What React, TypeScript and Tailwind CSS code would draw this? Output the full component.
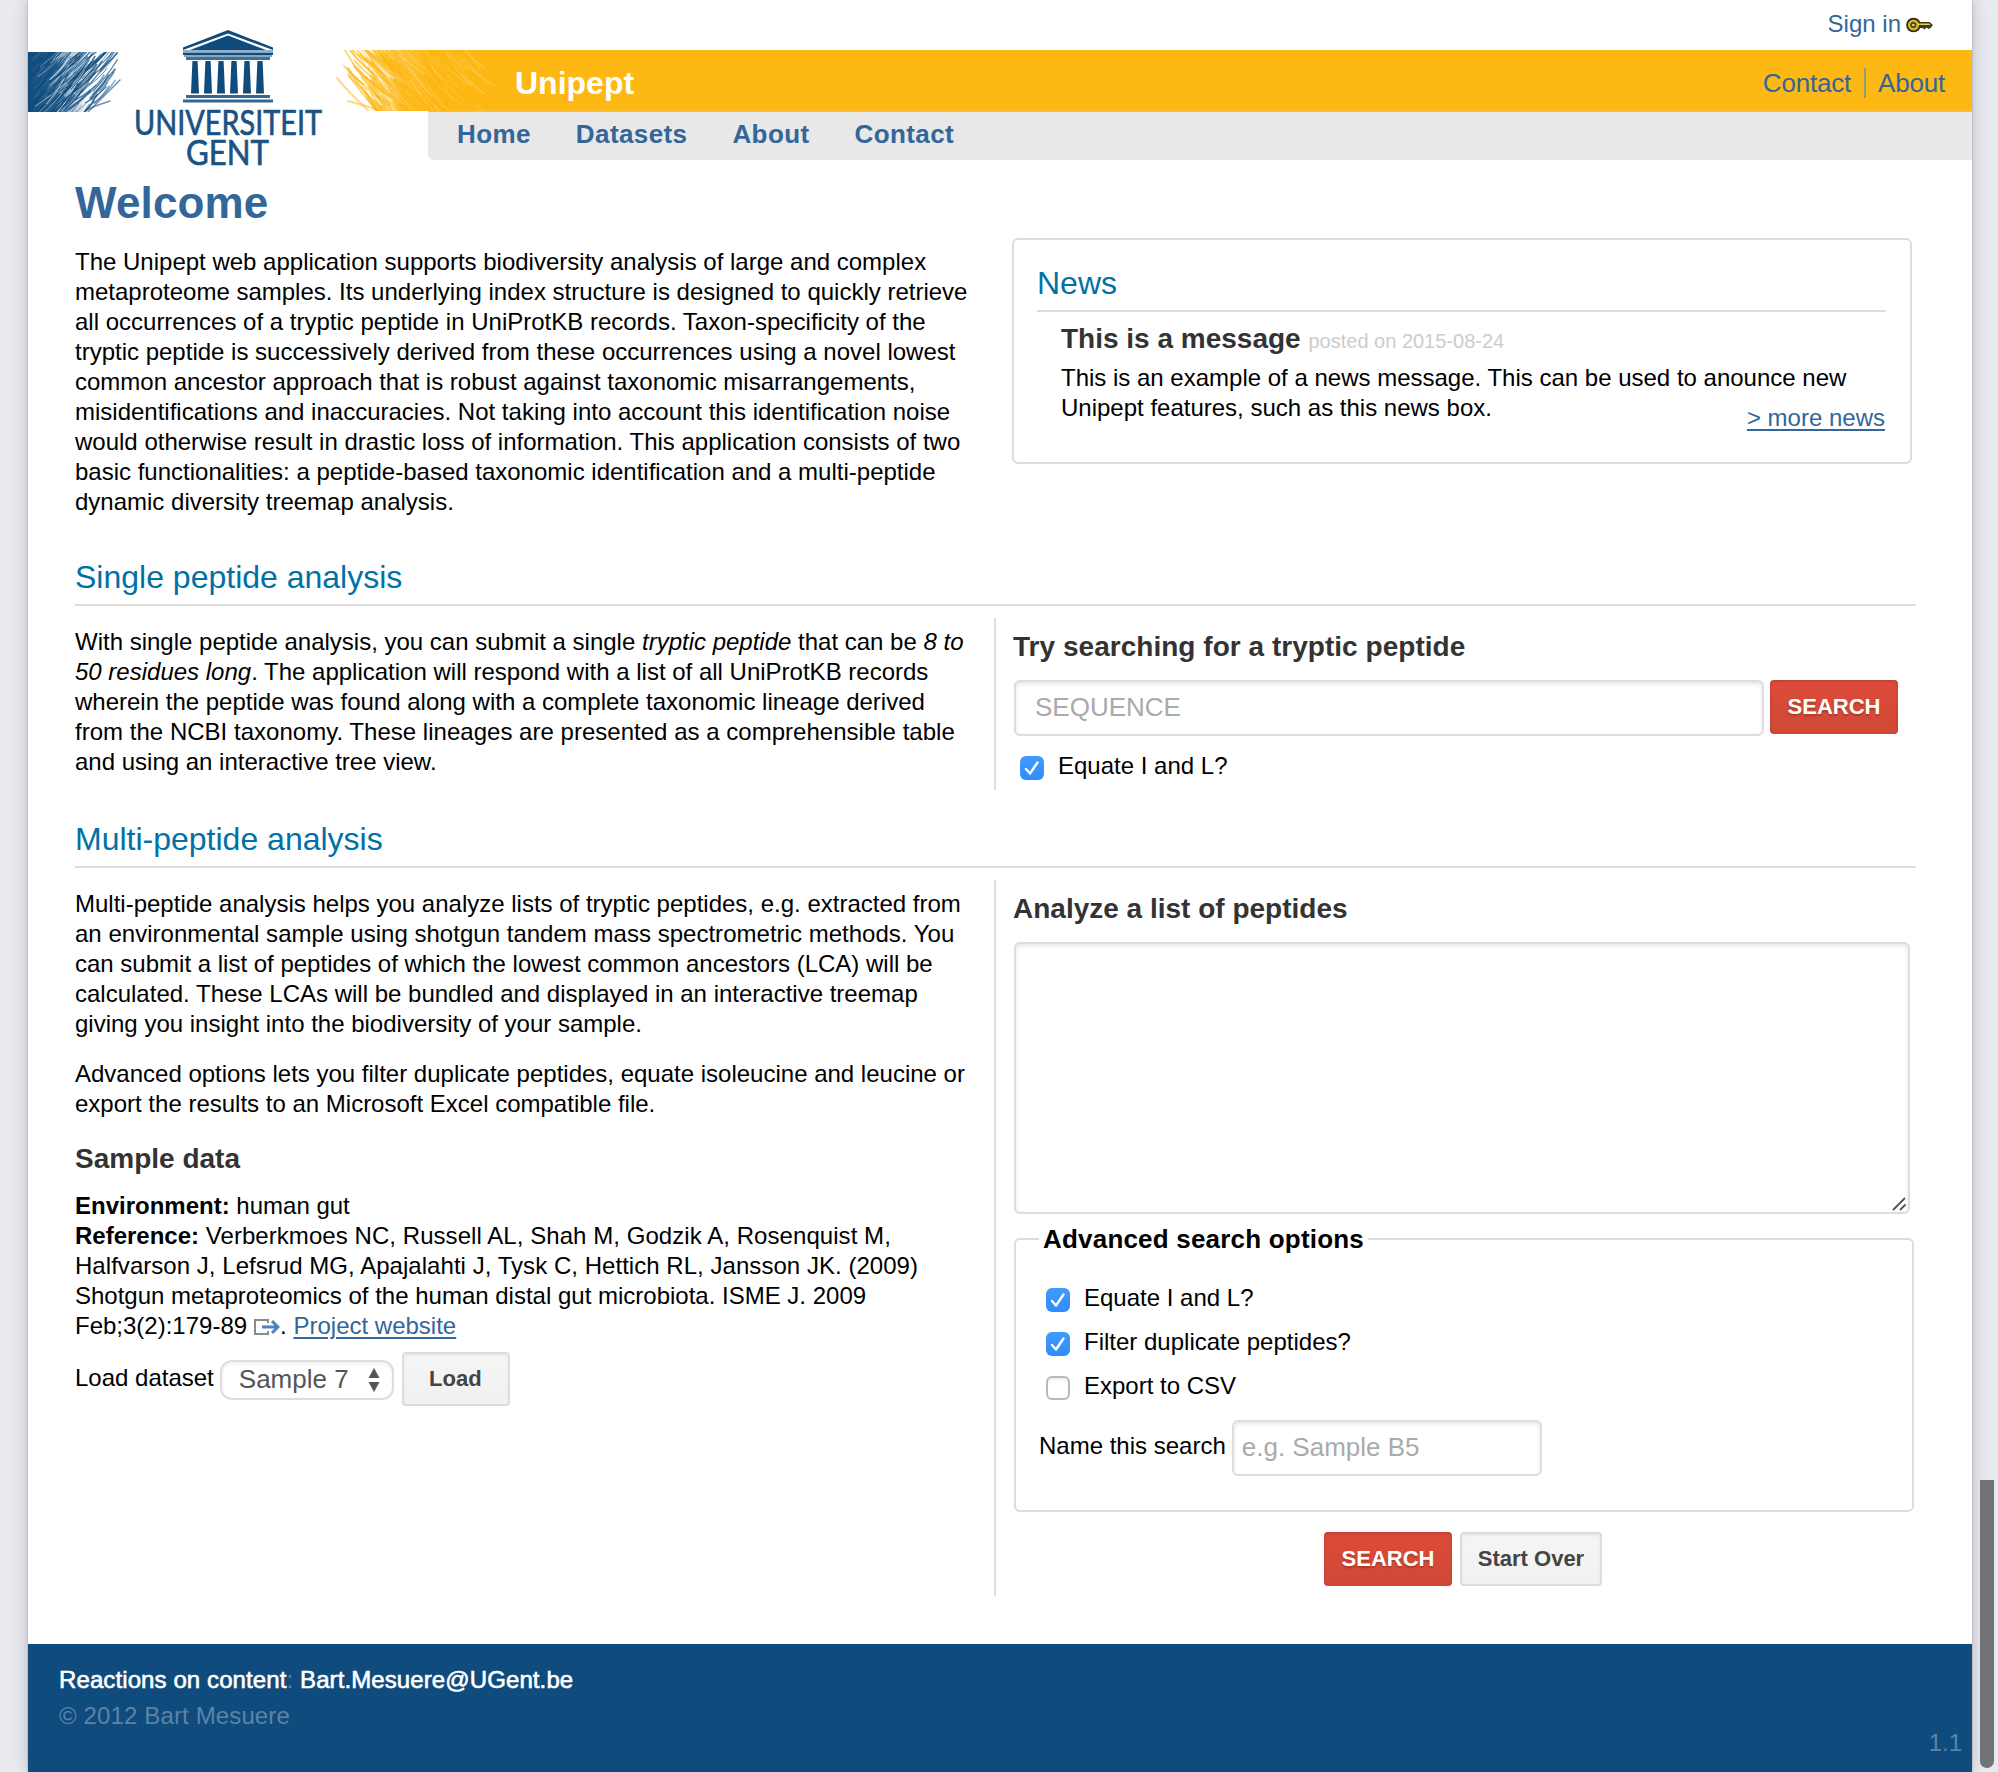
import React from "react";

type Stroke = { d: string; w: number; o: number };

function makeRandom(seed: number) {
  let s = seed;
  return () => {
    s = (s * 1664525 + 1013904223) % 4294967296;
    return s / 4294967296;
  };
}

// Crayon-like hatching that thins out from `near` to `far`; dir = 1 leans "/" and dir = -1 leans "\".
function hatch(seed: number, count: number, near: number, far: number, dir: number, power: number): Stroke[] {
  const rnd = makeRandom(seed);
  const out: Stroke[] = [];
  for (let i = 0; i < count; i++) {
    const t = Math.pow(rnd(), power);
    const y = 34 + rnd() * 74;
    const x = near + (far - near) * t - dir * Math.max(0, y - 78) * 0.8 * t;
    const len = 22 + rnd() * 20;
    const a = ((36 + rnd() * 20) * Math.PI) / 180;
    const x2 = x - dir * Math.cos(a) * len;
    const y2 = y + Math.sin(a) * len;
    const mx = (x + x2) / 2 + dir * 1.5;
    const my = (y + y2) / 2 + 1.5;
    out.push({
      d: `M${x.toFixed(1)} ${y.toFixed(1)}Q${mx.toFixed(1)} ${my.toFixed(1)} ${x2.toFixed(1)} ${y2.toFixed(1)}`,
      w: 0.9 + rnd() * 0.9,
      o: 0.35 + rnd() * 0.5,
    });
  }
  return out;
}

const blueStrokes = hatch(7, 190, 14, 90, 1, 1.35);
const blueGaps = hatch(31, 26, 30, 80, 1, 1);
const yellowStrokes = hatch(21, 230, 414, 318, -1, 1.15);
const lightStrokes = hatch(5, 46, 352, 436, -1, 0.9);

const blueFringe = [
  "M86 52Q74 72 54 92",
  "M87 69Q76 82 62 98",
  "M92 80Q78 94 60 112",
  "M82 101Q72 104 58 110",
  "M70 59Q56 68 40 84",
  "M62 52Q50 66 36 78",
];
const yellowFringe = [
  "M317 50Q328 70 344 88",
  "M333 55Q350 66 364 84",
  "M316 66Q330 80 350 98",
  "M309 78Q322 94 340 110",
  "M320 101Q332 104 350 110",
  "M344 50Q352 62 368 76",
];

function UniversityBanner() {
  return (
    <svg className="relative block overflow-visible" width="400" height="160" viewBox="0 0 400 160" fill="none">
      <defs>
        <clipPath id="blueClip">
          <rect x="0" y="52" width="110" height="60" />
        </clipPath>
        <clipPath id="yellowClip">
          <rect x="300" y="50" width="172" height="61" />
        </clipPath>
        <linearGradient id="blueFade" x1="0" x2="1" y1="0" y2="0">
          <stop offset="0" stopColor="#0f4c7e" />
          <stop offset="0.4" stopColor="#0f4c7e" stopOpacity="0.75" />
          <stop offset="1" stopColor="#0f4c7e" stopOpacity="0" />
        </linearGradient>
        <linearGradient id="yellowFade" x1="1" x2="0" y1="0" y2="0">
          <stop offset="0" stopColor="#fdb813" />
          <stop offset="0.35" stopColor="#fdb813" stopOpacity="0.8" />
          <stop offset="1" stopColor="#fdb813" stopOpacity="0" />
        </linearGradient>
      </defs>
      <g clipPath="url(#blueClip)" stroke="#0f4c7e" strokeLinecap="round">
        <path d="M0 51H60L58 112H0Z" fill="url(#blueFade)" stroke="none" />
        {blueStrokes.map((s, i) => (
          <path key={i} d={s.d} strokeWidth={s.w} opacity={s.o} />
        ))}
        <g stroke="#ffffff">
          {blueGaps.map((s, i) => (
            <path key={i} d={s.d} strokeWidth="1" opacity={s.o * 0.75} />
          ))}
        </g>
        {blueFringe.map((d, i) => (
          <path key={i} d={d} strokeWidth="1.5" opacity="0.6" />
        ))}
      </g>
      <g clipPath="url(#yellowClip)" stroke="#fdb813" strokeLinecap="round">
        <path d="M340 50H402V112H340Z" fill="url(#yellowFade)" stroke="none" />
        {yellowStrokes.map((s, i) => (
          <path key={i} d={s.d} strokeWidth={s.w + 0.4} opacity={s.o * 0.9} />
        ))}
        {yellowFringe.map((d, i) => (
          <path key={i} d={d} strokeWidth="2" opacity="0.5" />
        ))}
        <g stroke="#ffe09a">
          {lightStrokes.map((s, i) => (
            <path key={i} d={s.d} strokeWidth="1.2" opacity={s.o * 0.45} />
          ))}
        </g>
      </g>
      <g fill="#0f4c7e">
        <path d="M200 30L245 47.5V50L200 33.5L155 50V47.5Z" />
        <path d="M200 35.5L238 50H162Z" />
        <rect x="155" y="50" width="90" height="2" opacity="0.45" />
        <rect x="155" y="52.500" width="90" height="2.500" />
        <rect x="158" y="57" width="84" height="3" opacity="0.8" />
        <rect x="156" y="55" width="88" height="2" opacity="0.5" />
        {[167, 180, 193, 206, 219, 232].map((x) => (
          <path key={x} d={`M${x - 2.6} 61H${x + 2.6}L${x + 4} 93.500H${x - 4}Z`} />
        ))}
        <rect x="158" y="95" width="84" height="3" opacity="0.85" />
        <rect x="155" y="99.500" width="90" height="3" opacity="0.85" />
      </g>
      <g fill="#1a5284" stroke="#1a5284" strokeWidth="0.7" fontFamily="Lato, sans-serif" fontSize="35">
        <text x="106" y="134.500" textLength="188" lengthAdjust="spacingAndGlyphs">UNIVERSITEIT</text>
        <text x="158" y="165" textLength="83" lengthAdjust="spacingAndGlyphs">GENT</text>
      </g>
    </svg>
  );
}

function KeyIcon() {
  return (
    <svg width="28" height="18" viewBox="0 0 28 18">
      <path d="M13 6H23.500L27 9L24.500 12L22.500 13L20.500 11.500L18.500 13.500L16.500 12H13Z" fill="#3d3a26" />
      <circle cx="7.500" cy="9" r="7.300" fill="#2a2614" />
      <circle cx="7.500" cy="9" r="5.600" fill="#d3b51e" />
      <path d="M12 7.600H23L24.500 9H12Z" fill="#e8d24a" />
      <circle cx="7.300" cy="9" r="3" fill="#4a4216" />
      <circle cx="7.300" cy="9" r="1.300" fill="#d8d3b0" />
    </svg>
  );
}

function ExternalIcon() {
  return (
    <svg className="mx-[7px] inline-block align-[-1px]" width="26" height="16" viewBox="0 0 26 16" fill="none">
      <path d="M14 4V1H1V15H14V12" stroke="#8a8a8a" strokeWidth="2" />
      <path d="M8 8H24M18 2L24 8L18 14" stroke="#4f82b8" strokeWidth="3" />
    </svg>
  );
}

function Checkbox({ label, checked }: { label: string; checked: boolean }) {
  return (
    <div className="flex h-6 items-center">
      {checked ? (
        <span className="flex size-6 items-center justify-center rounded-[6px] bg-linear-to-b from-[#3f9bfd] to-[#2f8cfb]">
          <svg width="16" height="16" viewBox="0 0 16 16" fill="none">
            <path d="M2 9L6 13.500L13.500 2.500" stroke="white" strokeWidth="2.400" strokeLinecap="round" strokeLinejoin="round" />
          </svg>
        </span>
      ) : (
        <span className="size-6 rounded-[6px] border-2 border-[#b9b9b9] bg-white shadow-[inset_0_2px_2px_#eee]" />
      )}
      <span className="mb-1 ml-3.5 whitespace-nowrap">{label}</span>
    </div>
  );
}

const inputClass =
  "rounded-[6px] border-2 border-[#ddd] bg-white pb-0.5 text-[26px] shadow-[inset_0_2px_4px_rgba(0,0,0,0.1)] outline-none placeholder:text-[#aaa] placeholder:opacity-100";

function RedButton() {
  return (
    <button className="h-[54px] w-32 rounded-[4px] bg-linear-to-b from-[#dd4b39] to-[#d14836] pb-px text-[22px] leading-[26px] font-bold text-white [text-shadow:0_2px_2px_rgba(0,0,0,0.2)] shadow-[inset_0_1px_3px_rgba(0,0,0,0.2)]">
      SEARCH
    </button>
  );
}

function GreyButton({ className, children }: { className: string; children: React.ReactNode }) {
  return (
    <button
      className={
        "h-[54px] rounded-[4px] border-2 border-[#dcdcdc] bg-linear-to-b from-[#f5f5f5] to-[#f1f1f1] text-[22px] leading-[26px] font-bold text-[#444] shadow-[inset_0_2px_3px_rgba(0,0,0,0.05)] " +
        className
      }
    >
      {children}
    </button>
  );
}

function SectionTitle({ children }: { children: React.ReactNode }) {
  return <h2 className="h-[49px] w-[1841px] border-b-2 border-[#ddd] text-[32px] leading-10 text-[#0071a6]">{children}</h2>;
}

export default function App() {
  return (
    <div className="relative h-[1772px] w-[1998px] overflow-hidden bg-[#e9eaef] pl-7 font-['Liberation_Sans',Arial,sans-serif] text-2xl leading-[30px] text-black">
      <div className="flex h-[1772px] w-[1944px] flex-col bg-white shadow-[0_0_2px_rgba(0,0,0,0.25),0_0_14px_rgba(60,65,80,0.28)]">
        <header className="flex h-40 shrink-0">
          <div className="relative z-10 w-[400px]">
            <UniversityBanner />
          </div>
          <div className="w-[1544px]">
            <div className="flex h-[50px] justify-end pt-[9px] pr-[38px]">
              <a className="mr-[5px] text-[#336699]">Sign in</a>
              <span className="pt-[7px]">
                <KeyIcon />
              </span>
            </div>
            <div className="flex h-[62px] items-center border-b-2 border-[#fdc02d] bg-[#fdb813] pr-[27px] pl-[87px]">
              <span className="mt-[5px] text-[32px] leading-9 font-bold text-white">Unipept</span>
              <div className="mt-[5px] ml-auto flex text-[26px] leading-[30px] tracking-[-0.2px] text-[#336699]">
                <a className="pr-[13px]">Contact</a>
                <a className="border-l-2 border-[#8f9a86] pl-3">About</a>
              </div>
            </div>
            <nav className="flex h-12 gap-[45px] rounded-bl-[6px] bg-[#e8e8e8] pt-[7px] pl-[29px] text-[26px] leading-[30px] font-bold tracking-[0.4px] text-[#336699]">
              <a>Home</a>
              <a>Datasets</a>
              <a>About</a>
              <a>Contact</a>
            </nav>
          </div>
        </header>

        <main className="h-[1484px] shrink-0 pl-[47px]">
          <h1 className="pt-[18px] text-[44px] leading-[50px] font-bold tracking-[0.15px] text-[#336699]">Welcome</h1>

          <div className="flex h-[329px]">
            <p className="w-[937px] pt-[19px] whitespace-nowrap">
              The Unipept web application supports biodiversity analysis of large and complex
              <br />
              metaproteome samples. Its underlying index structure is designed to quickly retrieve
              <br />
              all occurrences of a tryptic peptide in UniProtKB records. Taxon-specificity of the
              <br />
              tryptic peptide is successively derived from these occurrences using a novel lowest
              <br />
              common ancestor approach that is robust against taxonomic misarrangements,
              <br />
              misidentifications and inaccuracies. Not taking into account this identification noise
              <br />
              would otherwise result in drastic loss of information. This application consists of two
              <br />
              basic functionalities: a peptide-based taxonomic identification and a multi-peptide
              <br />
              dynamic diversity treemap analysis.
            </p>
            <div className="mt-[10px] h-[226px] w-[900px] rounded-[6px] border-2 border-[#ddd] pt-[23px] pr-6 pl-[23px]">
              <h2 className="h-[49px] border-b-2 border-[#ddd] text-[32px] leading-10 text-[#0071a6]">News</h2>
              <div className="pl-6 whitespace-nowrap">
                <h3 className="pt-[10px] text-[28px] leading-[34px] font-bold text-[#333]">
                  This is a message <span className="text-xl font-normal text-[#ccc]">posted on 2015-08-24</span>
                </h3>
                <p className="pt-[7px]">
                  This is an example of a news message. This can be used to anounce new
                  <br />
                  Unipept features, such as this news box.
                </p>
              </div>
              <div className="-mt-5 pr-px text-right">
                <a className="text-[#336699] underline decoration-2 underline-offset-[3px]">&gt; more news</a>
              </div>
            </div>
          </div>

          <section className="h-[262px]">
            <SectionTitle>Single peptide analysis</SectionTitle>
            <div className="mt-3 flex h-[172px]">
              <p className="w-[919px] pt-[9px] whitespace-nowrap">
                With single peptide analysis, you can submit a single <i>tryptic peptide</i> that can be <i>8 to</i>
                <br />
                <i>50 residues long</i>. The application will respond with a list of all UniProtKB records
                <br />
                wherein the peptide was found along with a complete taxonomic lineage derived
                <br />
                <span className="tracking-[0.02px]">
                  from the NCBI taxonomy. These lineages are presented as a comprehensible table
                </span>
                <br />
                and using an interactive tree view.
              </p>
              <div className="border-l-2 border-[#ddd] pt-3 pl-[17px]">
                <h3 className="text-[28px] leading-[34px] font-bold tracking-[0.03px] text-[#333]">
                  Try searching for a tryptic peptide
                </h3>
                <div className="mt-4 flex gap-1.5 pl-px">
                  <input className={inputClass + " h-14 w-[750px] px-[19px]"} placeholder="SEQUENCE" />
                  <RedButton />
                </div>
                <div className="mt-5 pl-[7px]">
                  <Checkbox label="Equate I and L?" checked />
                </div>
              </div>
            </div>
          </section>

          <section>
            <SectionTitle>Multi-peptide analysis</SectionTitle>
            <div className="mt-3 flex h-[716px]">
              <div className="w-[919px] pt-[9px] whitespace-nowrap">
                <p>
                  Multi-peptide analysis helps you analyze lists of tryptic peptides, e.g. extracted from
                  <br />
                  <span className="tracking-[0.02px]">
                    an environmental sample using shotgun tandem mass spectrometric methods. You
                  </span>
                  <br />
                  can submit a list of peptides of which the lowest common ancestors (LCA) will be
                  <br />
                  calculated. These LCAs will be bundled and displayed in an interactive treemap
                  <br />
                  giving you insight into the biodiversity of your sample.
                </p>
                <p className="mt-5">
                  Advanced options lets you filter duplicate peptides, equate isoleucine and leucine or
                  <br />
                  export the results to an Microsoft Excel compatible file.
                </p>
                <h3 className="mt-[23px] text-[28px] leading-[34px] font-bold text-[#333]">Sample data</h3>
                <p className="mt-[15px]">
                  <b>Environment:</b> human gut
                  <br />
                  <b>Reference:</b>{" "}
                  <span className="tracking-[0.06px]">Verberkmoes NC, Russell AL, Shah M, Godzik A, Rosenquist M,</span>
                  <br />
                  <span className="tracking-[0.04px]">
                    Halfvarson J, Lefsrud MG, Apajalahti J, Tysk C, Hettich RL, Jansson JK. (2009)
                  </span>
                  <br />
                  Shotgun metaproteomics of the human distal gut microbiota. ISME J. 2009
                  <br />
                  Feb;3(2):179-89
                  <ExternalIcon />
                  <span className="-ml-[7px]">.</span>{" "}
                  <a className="text-[#336699] underline decoration-2 underline-offset-[3px]">Project website</a>
                </p>
                <div className="mt-[11px] flex h-[54px]">
                  <span className="pt-[11px]">Load dataset</span>
                  <div className="mt-2 ml-1.5 flex h-10 w-[174px] items-center justify-between rounded-xl border-2 border-[#ddd] pr-3 pb-0.5 pl-[17px] text-[26px] text-[#555] shadow-[inset_0_2px_3px_rgba(0,0,0,0.06)]">
                    Sample 7
                    <svg className="mt-0.5" width="12" height="24" viewBox="0 0 12 24" fill="#555">
                      <path d="M6 0L11.500 10H0.500ZM6 24L11.500 14H0.500Z" />
                    </svg>
                  </div>
                  <GreyButton className="ml-2 w-[108px] pr-px">Load</GreyButton>
                </div>
              </div>
              <div className="border-l-2 border-[#ddd] pt-3 pl-[17px]">
                <h3 className="text-[28px] leading-[34px] font-bold text-[#333]">Analyze a list of peptides</h3>
                <div className="mt-4 ml-px flex h-[272px] w-[896px] items-end justify-end rounded-[6px] border-2 border-[#ddd] shadow-[inset_0_2px_4px_rgba(0,0,0,0.1)]">
                  <svg width="17" height="17" viewBox="0 0 17 17" stroke="#555" strokeWidth="1.800">
                    <path d="M2 15L14 3M9 15L14.500 9.500" />
                  </svg>
                </div>
                <fieldset className="mt-2.5 ml-px h-[288px] w-[900px] rounded-[6px] border-2 border-[#ddd] pl-[23px]">
                  <legend className="px-1 text-[26px] leading-[30px] font-bold tracking-[0.2px]">Advanced search options</legend>
                  <div className="flex flex-col gap-5 pt-[34px] pl-[7px]">
                    <Checkbox label="Equate I and L?" checked />
                    <Checkbox label="Filter duplicate peptides?" checked />
                    <Checkbox label="Export to CSV" checked={false} />
                  </div>
                  <div className="mt-5 flex">
                    <span className="mr-1.5 pt-[11px]">Name this search</span>
                    <input className={inputClass + " h-14 w-[310px] px-2"} placeholder="e.g. Sample B5" />
                  </div>
                </fieldset>
                <div className="mt-5 flex gap-2 pl-[311px]">
                  <RedButton />
                  <GreyButton className="w-[142px]">Start Over</GreyButton>
                </div>
              </div>
            </div>
          </section>
        </main>

        <footer className="flex h-32 shrink-0 justify-between bg-[#0f4c7d] pl-[31px] text-[#5d83a6]">
          <div className="pt-[21px]">
            <p className="tracking-[0.1px] text-white [-webkit-text-stroke:0.6px_white]">
              Reactions on content<span className="text-[#5d83a6] [-webkit-text-stroke:0px]">:</span> Bart.Mesuere@UGent.be
            </p>
            <p className="pt-1.5 tracking-[0.13px]">© 2012 Bart Mesuere</p>
          </div>
          <span className="self-end pr-[10px] pb-[14px]">1.1</span>
        </footer>
      </div>
      <div className="absolute top-[1480px] right-1 h-[288px] w-3.5 rounded-b-[7px] bg-[#727377]" />
    </div>
  );
}
